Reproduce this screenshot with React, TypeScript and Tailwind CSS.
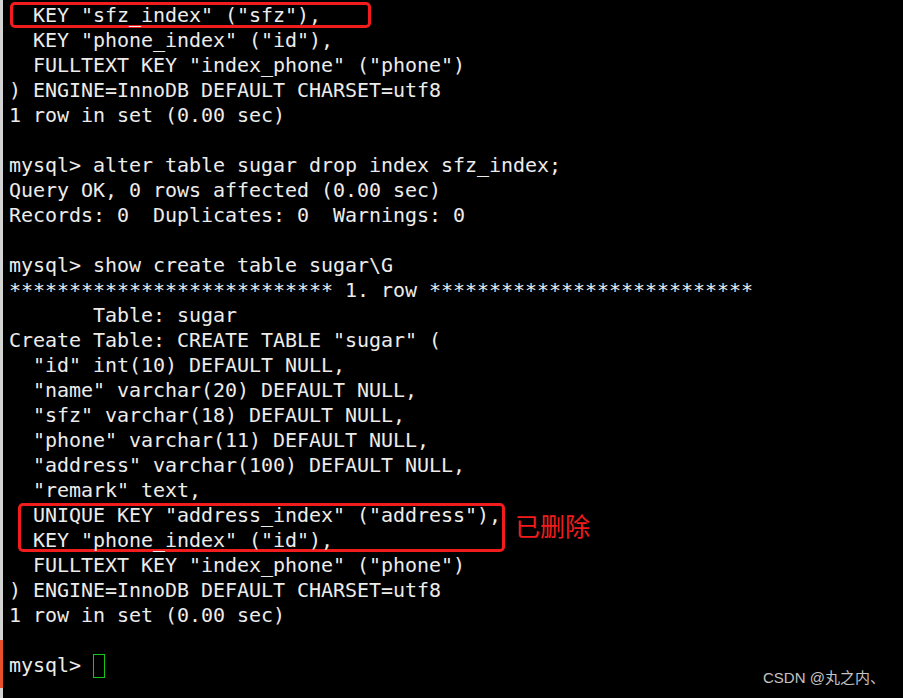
import React from "react";

const lines: string[] = [
  '  KEY "sfz_index" ("sfz"),',
  '  KEY "phone_index" ("id"),',
  '  FULLTEXT KEY "index_phone" ("phone")',
  ") ENGINE=InnoDB DEFAULT CHARSET=utf8",
  "1 row in set (0.00 sec)",
  "",
  "mysql> alter table sugar drop index sfz_index;",
  "Query OK, 0 rows affected (0.00 sec)",
  "Records: 0  Duplicates: 0  Warnings: 0",
  "",
  "mysql> show create table sugar\\G",
  "*************************** 1. row ***************************",
  "       Table: sugar",
  'Create Table: CREATE TABLE "sugar" (',
  '  "id" int(10) DEFAULT NULL,',
  '  "name" varchar(20) DEFAULT NULL,',
  '  "sfz" varchar(18) DEFAULT NULL,',
  '  "phone" varchar(11) DEFAULT NULL,',
  '  "address" varchar(100) DEFAULT NULL,',
  '  "remark" text,',
  '  UNIQUE KEY "address_index" ("address"),',
  '  KEY "phone_index" ("id"),',
  '  FULLTEXT KEY "index_phone" ("phone")',
  ") ENGINE=InnoDB DEFAULT CHARSET=utf8",
  "1 row in set (0.00 sec)",
  "",
];

export default function App() {
  return (
    <div className="relative flex h-[698px] w-[903px] overflow-hidden bg-black">
      {/* annotations */}
      <div className="absolute left-[10px] top-[2px] h-[26px] w-[361px] rounded-[5px] border-[3px] border-[#f21c1c]" />
      <div className="absolute left-[18px] top-[503px] h-[49px] w-[487px] rounded-[5px] border-[3px] border-[#f21c1c]" />
      <div
        className="absolute left-[515px] top-[510px] text-[25px] leading-[30px] text-[#f21c1c]"
        style={{ fontFamily: '"Noto Sans CJK SC", sans-serif' }}
      >
        已删除
      </div>
      <div
        className="absolute left-[763px] top-[668px] text-[15px] leading-[20px] text-[#c4c4c4]"
        style={{ fontFamily: '"Liberation Sans", "Noto Sans CJK SC", sans-serif' }}
      >
        CSDN @丸之内、
      </div>

      {/* left window edge */}
      <div className="flex w-[3px] flex-col">
        <div className="h-[640px] bg-[#d4d4d4]" />
        <div className="h-[48px] bg-[#e8502c]" />
        <div className="flex-1 bg-[#d4d4d4]" />
      </div>
      <div
        className="relative z-10 flex-1 pl-[6px] pt-[3px] text-[20px] leading-[25px] tracking-[-0.04px] text-[#ececec]"
        style={{ fontFamily: '"DejaVu Sans Mono", "Liberation Mono", monospace' }}
      >
        {lines.map((l, i) => (
          <div key={i} className="h-[25px] whitespace-pre">
            {l}
          </div>
        ))}
        <div className="flex h-[25px] items-center whitespace-pre">
          <span>mysql&gt; </span>
          <span className="inline-block h-[24px] w-[12px] border-[1.5px] border-[#12c812]" />
        </div>
      </div>
    </div>
  );
}
